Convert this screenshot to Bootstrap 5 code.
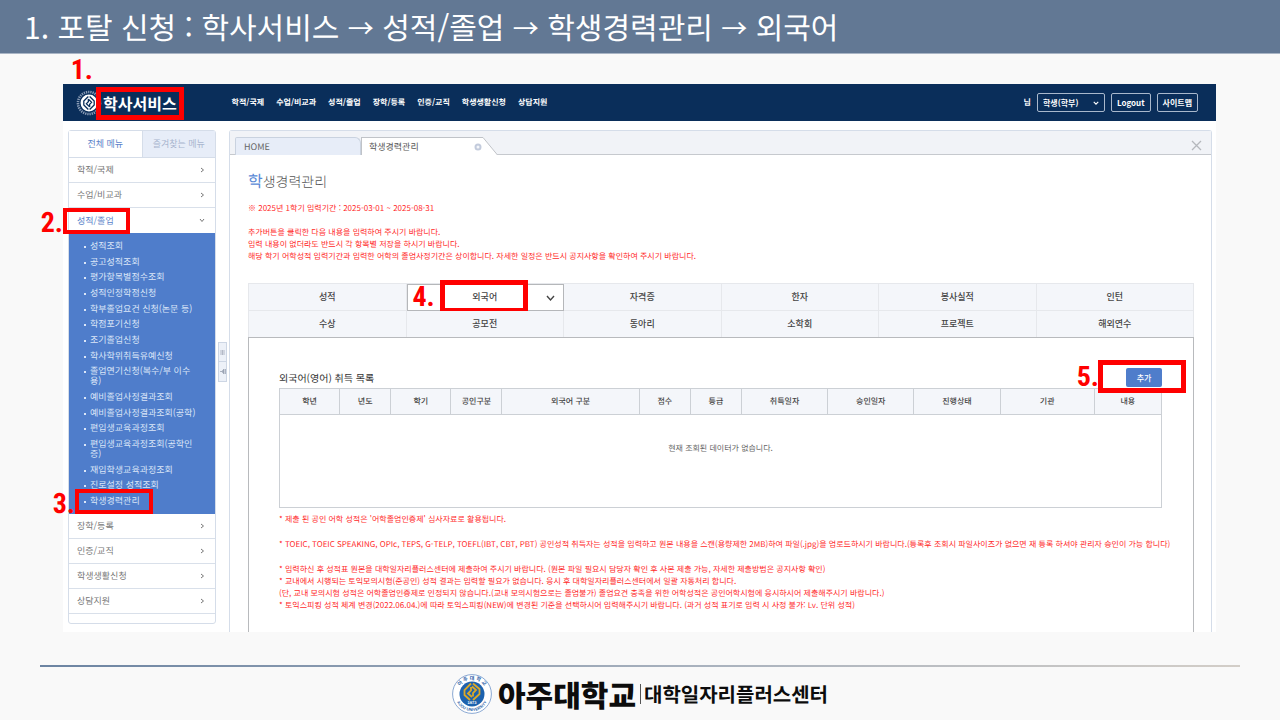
<!DOCTYPE html>
<html lang="ko">
<head>
<meta charset="utf-8">
<meta name="viewport" content="width=device-width, initial-scale=1">
<title>포탈 신청 안내</title>
<link href="https://cdn.jsdelivr.net/npm/bootstrap@5.3.0/dist/css/bootstrap.min.css" rel="stylesheet">
<style>
:root{--navy:#0a2e5a;--blue:#4f7dcb;--edge:#d5dde9;--red:#f00}
body{background:#f9f9f9;font-family:"Noto Sans CJK KR","Noto Sans",sans-serif;color:#444;font-size:8px;line-height:12px;text-rendering:geometricPrecision}
a{text-decoration:none;color:inherit}
.slide-head{background:#627894;border-bottom:1px solid #a9b5c5;color:#fff;padding:0 24px}
.slide-head h1{font-size:30px;line-height:53px;font-weight:400;margin:0}
.slide-head .arrow{font-size:26px;line-height:30px;vertical-align:1px}
.portal-wrap{padding:30px 64px 0 63px}
.portal{background:#fff}
.portal-head{background:var(--navy);height:37px;color:#fff;font-weight:700;padding:0 18px 0 13px}
.brand-title{font-size:16px;line-height:24px;position:relative;margin-left:1px}
.top-menu{margin-left:55px;gap:12px}
.account{gap:6px}
.head-ctl{height:19px;border:1px solid #a9b8cc;border-radius:2px;background-color:transparent;color:#fff;font-size:8px;font-weight:700;line-height:12px;padding:0 5px}
.head-ctl.form-select{width:68px;background-image:url("data:image/svg+xml,%3Csvg xmlns='http://www.w3.org/2000/svg' viewBox='0 0 16 16'%3E%3Cpath fill='none' stroke='%23fff' stroke-width='3' d='m2 5 6 6 6-6'/%3E%3C/svg%3E");background-size:6px 6px;background-position:right 5px center}
.head-ctl option{color:#222}
.portal-body{padding:9px 4px 0 5px}
/* sidebar */
.side{width:148px;flex:none;border:1px solid var(--edge);border-radius:3px;font-size:9px;color:#777;padding-bottom:9px}
.side-tabs button{flex:1;border:0;background:#e7edf8;color:#a9b6cf;height:27px;border-bottom:1px solid var(--edge);padding:0}
.side-tabs button.on{background:#fff;color:#5a82c9;border-right:1px solid var(--edge)}
.side-row{display:flex;align-items:center;justify-content:space-between;height:25px;padding:0 10px 0 8px;border-bottom:1px solid #d9e0ea;position:relative}
.side-row.open{color:#5a82c9;border-bottom:0}
.side-sub{background:var(--blue);color:#dbe6f8;margin:0;padding:8px 18px 8px 21px;min-height:281px;list-style:none;line-height:10px}
.side-sub li{position:relative}
.side-sub li::before{content:"";position:absolute;left:-6px;top:5px;width:2px;height:2px;background:#dbe6f8}
.grip{width:9px;flex:none;margin:212px 2px 0;align-self:flex-start}
.grip button{display:flex;align-items:center;justify-content:center;width:9px;height:20px;padding:0;border:1px solid #cdd6e4;background:#edf1f8}
.grip button+button{border-top:0}
/* work area */
.work{flex:1;min-width:0;border:1px solid var(--edge);border-bottom:0;border-radius:3px 3px 0 0}
.tabbar{background:#f1f3f7;border-bottom:1px solid #c6c9ce;height:24px;padding:6px 9px 0 5px;font-size:9px}
.tabbar .doc{height:18px;display:flex;align-items:center;padding:0 8px;width:126px;border:1px solid #c9d2df;border-bottom:0;background:#e7edf8;color:#666;border-radius:2px 6px 0 0}
.tabbar .doc.on{width:121px;background:#fff;border-color:#c0c3c8;border-right:0;border-radius:0;color:#555;justify-content:space-between;padding:0 0 0 7px}
.close-btn{border:0;background:none;padding:0;line-height:0}
.work-in{padding:15px 17px 0 18px}
.page-title{font-size:14px;line-height:20px;font-weight:300;color:#555;margin:0 0 11px}
.page-title span{font-size:16px;font-weight:400;color:#5a8ad6}
.redtext{color:#ff2a2a}
.redtext p{margin:0}
.kinds{display:grid;grid-template-columns:repeat(6,1fr);margin-top:20px;border-top:1px solid #e6e8ec;border-left:1px solid #e6e8ec}
.kinds button{border:0;border-right:1px solid #e6e8ec;border-bottom:1px solid #e6e8ec;background:#f4f6fa;height:27px;font-size:9px;line-height:12px;font-weight:500;color:#444;padding:0;position:relative}
.kinds button.on{background:#fff;outline:1px solid #b5b7ba;outline-offset:-1px}
.kinds .chev{position:absolute;right:8px;top:10px}
.sheet{border:1px solid #b8babd;border-bottom:0;margin-top:-1px;padding:30px 31px 20px 30px;min-height:295px;position:relative}
.sheet h2{font-size:10px;line-height:18px;font-weight:400;margin:0;color:#333}
.add-btn{position:relative;width:36px;height:19px;border:0;border-radius:2px;background:var(--blue);color:#fff;font-size:8px;line-height:12px;font-weight:500;padding:0}
.list{width:100%;table-layout:fixed;border-collapse:collapse;margin-top:1px}
.list th,.list td{border:1px solid #ccd0d5;padding:0;text-align:center}
.list th{height:26px;background:#f4f6fa;font-weight:500;color:#444}
.list td{height:93px;vertical-align:top;padding-top:28px;color:#666}
.c5{width:51px}.c6{width:60px}.c9{width:86px}.c10{width:94px}.c13{width:137px}.c7{width:67px}
.notes{margin:6px -24px 0 0}
.notes .apart{margin-bottom:13px}
/* step callouts laid over the screen */
.ring{position:absolute;border:5px solid var(--red);width:88px;height:33px;pointer-events:none}
.ring b{position:absolute;right:100%;margin-right:4px;top:0;font-family:"Liberation Sans Narrow","Roboto Condensed",Roboto,sans-serif;font-size:28px;line-height:28px;font-weight:700;color:var(--red)}
.ring-1{left:-7px;top:-4px}.ring-1 b{top:-36px;margin-right:8px}
.ring-2{left:-6px;top:0;width:67px;height:26px;border-width:4px}
.ring-3{left:-15px;top:-7px;width:78px;height:25px;border-width:4px}
.ring-4{left:50%;margin-left:-45px;top:-4px}.ring-4 b{margin-right:10px}
.ring-5{right:-24px;top:-8px}
.ring-2 b,.ring-3 b{top:-3px}
.ring-4 b,.ring-5 b{top:-2px}
/* footer */
.slide-foot{margin:33px 40px 0;padding-top:9px;color:#0c0c0c;position:relative}
.slide-foot::before{content:"";position:absolute;left:0;right:0;top:0;height:2px;background:linear-gradient(90deg,#6c84a2,#a9b2be 55%,#d3cec8)}
.univ{font-size:30px;line-height:40px;font-weight:900;margin-left:6px}
.center-name{font-size:20px;line-height:20px;font-weight:700;border-left:1px solid #555;margin-left:4px;padding-left:3px}
</style>
</head>
<body>
<header class="slide-head"><h1>1. 포탈 신청 : 학사서비스 <span class="arrow">→</span> 성적/졸업 <span class="arrow">→</span> 학생경력관리 <span class="arrow">→</span> 외국어</h1></header>

<main class="portal-wrap">
<div class="portal">
  <div class="portal-head d-flex align-items-center">
    <svg width="26" height="26" viewBox="0 0 40 40" fill="none">
      <circle cx="20" cy="20" r="17" stroke="#8b9db7" stroke-width="4" stroke-dasharray="2 1.4"/>
      <circle cx="20" cy="20" r="13" fill="#fff"/>
      <g stroke="#0a2e5a" stroke-width="2"><path d="M19 10 12 17v6l7 7M21 30l7-7v-6l-7-7"/><path d="M19 14v4l-3 3 5 5M21 26v-4l3-3-5-5"/></g>
    </svg>
    <div class="brand-title">학사서비스<span class="ring ring-1"><b>1.</b></span></div>
    <nav class="top-menu d-flex">
      <a href="#">학적/국제</a><a href="#">수업/비교과</a><a href="#">성적/졸업</a><a href="#">장학/등록</a><a href="#">인증/교직</a><a href="#">학생생활신청</a><a href="#">상담지원</a>
    </nav>
    <div class="account ms-auto d-flex align-items-center">
      <label for="role">님</label>
      <select id="role" class="form-select head-ctl"><option>학생(학부)</option></select>
      <button type="button" class="head-ctl">Logout</button>
      <button type="button" class="head-ctl">사이트맵</button>
    </div>
  </div>

  <div class="portal-body d-flex">
    <aside class="side align-self-start">
      <div class="side-tabs d-flex"><button type="button" class="on">전체 메뉴</button><button type="button">즐겨찾는 메뉴</button></div>
      <a href="#" class="side-row">학적/국제<svg width="5" height="6" viewBox="0 0 5 6"><path d="m1 1 2.500 2L1 5" fill="none" stroke="#777"/></svg></a>
      <a href="#" class="side-row">수업/비교과<svg width="5" height="6" viewBox="0 0 5 6"><path d="m1 1 2.500 2L1 5" fill="none" stroke="#777"/></svg></a>
      <a href="#" class="side-row open">성적/졸업<svg width="6" height="5" viewBox="0 0 6 5"><path d="m1 1 2 2.500L5 1" fill="none" stroke="#777"/></svg><span class="ring ring-2"><b>2.</b></span></a>
      <ul class="side-sub d-flex flex-column justify-content-between">
        <li><a href="#">성적조회</a></li>
        <li><a href="#">공고성적조회</a></li>
        <li><a href="#">평가항목별점수조회</a></li>
        <li><a href="#">성적인정학점신청</a></li>
        <li><a href="#">학부졸업요건 신청(논문 등)</a></li>
        <li><a href="#">학점포기신청</a></li>
        <li><a href="#">조기졸업신청</a></li>
        <li><a href="#">학사학위취득유예신청</a></li>
        <li><a href="#">졸업연기신청(복수/부 이수<br>용)</a></li>
        <li><a href="#">예비졸업사정결과조회</a></li>
        <li><a href="#">예비졸업사정결과조회(공학)</a></li>
        <li><a href="#">편입생교육과정조회</a></li>
        <li><a href="#">편입생교육과정조회(공학인<br>증)</a></li>
        <li><a href="#">재입학생교육과정조회</a></li>
        <li><a href="#">진로설정 성적조회</a></li>
        <li><a href="#">학생경력관리</a><span class="ring ring-3"><b>3.</b></span></li>
      </ul>
      <a href="#" class="side-row">장학/등록<svg width="5" height="6" viewBox="0 0 5 6"><path d="m1 1 2.500 2L1 5" fill="none" stroke="#777"/></svg></a>
      <a href="#" class="side-row">인증/교직<svg width="5" height="6" viewBox="0 0 5 6"><path d="m1 1 2.500 2L1 5" fill="none" stroke="#777"/></svg></a>
      <a href="#" class="side-row">학생생활신청<svg width="5" height="6" viewBox="0 0 5 6"><path d="m1 1 2.500 2L1 5" fill="none" stroke="#777"/></svg></a>
      <a href="#" class="side-row">상담지원<svg width="5" height="6" viewBox="0 0 5 6"><path d="m1 1 2.500 2L1 5" fill="none" stroke="#777"/></svg></a>
    </aside>

    <div class="grip">
      <button type="button" aria-label="메뉴 고정"><svg width="5" height="5" viewBox="0 0 5 5"><path d="M1 0v5M2.500 0v5M4 0v5" stroke="#a3abb9" stroke-width=".8"/></svg></button>
      <button type="button" aria-label="메뉴 닫기"><svg width="6" height="5" viewBox="0 0 6 5"><path d="M0 2.500h2M4 0 2 2.500 4 5zM5.500 0v5" stroke="#9aa3b3" stroke-width=".8" fill="#9aa3b3"/></svg></button>
    </div>

    <section class="work">
      <div class="tabbar d-flex">
        <a href="#" class="doc">HOME</a>
        <div class="doc on">학생경력관리<button type="button" class="close-btn" aria-label="탭 닫기"><svg width="8" height="8" viewBox="0 0 8 8"><circle cx="4" cy="4" r="2.500" fill="#f4f6fa" stroke="#c3cbdc" stroke-width="2"/></svg></button></div>
        <svg width="16" height="18" viewBox="0 0 16 18"><path d="M0 .5h1L15.500 18H0z" fill="#fff"/><path d="M0 .5h1L15.500 18" fill="none" stroke="#c0c3c8"/></svg>
        <button type="button" class="close-btn ms-auto" aria-label="닫기"><svg width="11" height="11" viewBox="0 0 11 11"><path d="m1 1 9 9M10 1l-9 9" stroke="#b5b8bd" stroke-width="1.300"/></svg></button>
      </div>
      <div class="work-in">
        <h1 class="page-title"><span>학</span>생경력관리</h1>
        <div class="redtext">
          <p class="mb-0">※ 2025년 1학기 입력기간 : 2025-03-01 ~ 2025-08-31</p>
          <p class="pt-2 mt-1">추가버튼을 클릭한 다음 내용을 입력하여 주시기 바랍니다.<br>입력 내용이 없더라도 반드시 각 항목별 저장을 하시기 바랍니다.<br>해당 학기 어학성적 입력기간과 입력한 어학의 졸업사정기간은 상이합니다. 자세한 일정은 반드시 공지사항을 확인하여 주시기 바랍니다.</p>
        </div>
        <div class="kinds">
          <button type="button">성적</button>
          <button type="button" class="on">외국어<svg class="chev" width="9" height="8" viewBox="0 0 9 8"><path d="m1 2 3.500 4L8 2" fill="none" stroke="#444" stroke-width="1.400"/></svg><span class="ring ring-4"><b>4.</b></span></button>
          <button type="button">자격증</button>
          <button type="button">한자</button>
          <button type="button">봉사실적</button>
          <button type="button">인턴</button>
          <button type="button">수상</button>
          <button type="button">공모전</button>
          <button type="button">동아리</button>
          <button type="button">소학회</button>
          <button type="button">프로젝트</button>
          <button type="button">해외연수</button>
        </div>
        <div class="sheet">
          <div class="d-flex justify-content-between align-items-center">
            <h2>외국어(영어) 취득 목록</h2>
            <button type="button" class="add-btn">추가<span class="ring ring-5"><b>5.</b></span></button>
          </div>
          <table class="list">
            <colgroup><col class="c6"><col class="c5"><col class="c6"><col class="c5"><col class="c13"><col class="c5"><col class="c5"><col class="c9"><col class="c9"><col class="c9"><col class="c10"><col class="c7"></colgroup>
            <thead><tr><th>학년</th><th>년도</th><th>학기</th><th>공인구분</th><th>외국어 구분</th><th>점수</th><th>등급</th><th>취득일자</th><th>승인일자</th><th>진행상태</th><th>기관</th><th>내용</th></tr></thead>
            <tbody><tr><td colspan="12">현재 조회된 데이터가 없습니다.</td></tr></tbody>
          </table>
          <div class="notes redtext">
            <p class="apart">* 제출 된 공인 어학 성적은 '어학졸업인증제' 심사자료로 활용됩니다.</p>
            <p class="apart">* TOEIC, TOEIC SPEAKING, OPIc, TEPS, G-TELP, TOEFL(IBT, CBT, PBT) 공인성적 취득자는 성적을 입력하고 원본 내용을 스캔(용량제한 2MB)하여 파일(.jpg)을 업로드하시기 바랍니다.(등록후 조회시 파일사이즈가 없으면 재 등록 하셔야 관리자 승인이 가능 합니다)</p>
            <p>* 입력하신 후 성적표 원본을 대학일자리플러스센터에 제출하여 주시기 바랍니다. (원본 파일 필요시 담당자 확인 후 사본 제출 가능, 자세한 제출방법은 공지사항 확인)</p>
            <p>* 교내에서 시행되는 토익모의시험(준공인) 성적 결과는 입력할 필요가 없습니다. 응시 후 대학일자리플러스센터에서 일괄 자동처리 합니다.</p>
            <p>(단, 교내 모의시험 성적은 어학졸업인증제로 인정되지 않습니다.(교내 모의시험으로는 졸업불가) 졸업요건 충족을 위한 어학성적은 공인어학시험에 응시하시어 제출해주시기 바랍니다.)</p>
            <p>* 토익스피킹 성적 체계 변경(2022.06.04.)에 따라 토익스피킹(NEW)에 변경된 기준을 선택하시어 입력해주시기 바랍니다. (과거 성적 표기로 입력 시 사정 불가: Lv. 단위 성적)</p>
          </div>
        </div>
      </div>
    </section>
  </div>
</div>
</main>

<footer class="slide-foot d-flex justify-content-center align-items-center">
  <svg width="40" height="40" viewBox="0 0 40 40">
    <defs><path id="arcTop" d="M5.500 20a14.500 14.500 0 0 1 29 0"/><path id="arcLow" d="M3 20a17 17 0 0 0 34 0"/></defs>
    <circle cx="20" cy="20" r="19.400" fill="#fff" stroke="#6d93c8" stroke-width=".8"/>
    <circle cx="20" cy="20" r="12.500" fill="#1d62ae"/>
    <g font-weight="700" fill="#2a5fa8" text-anchor="middle">
      <text font-size="5"><textPath href="#arcTop" startOffset="50%">아 주 대 학 교</textPath></text>
      <text font-size="4" font-family="Liberation Sans"><textPath href="#arcLow" startOffset="50%">AJOU UNIVERSITY</textPath></text>
      <text x="20" y="30" font-size="4" fill="#fff" font-family="Liberation Sans">1973</text>
    </g>
    <g fill="none" stroke="#dba927" stroke-width="1.800"><path d="M19 9.500 12.500 16v5l5.500 5M21 26l6.500-6v-5L21 9.500"/><path d="M19 13v3.500l-3 3 4 3.500M21 22.500V19l3-3-4-3.500"/></g>
  </svg>
  <span class="univ">아주대학교</span><span class="center-name">대학일자리플러스센터</span>
</footer>
<script src="https://cdn.jsdelivr.net/npm/bootstrap@5.3.0/dist/js/bootstrap.bundle.min.js"></script>
</body>
</html>
